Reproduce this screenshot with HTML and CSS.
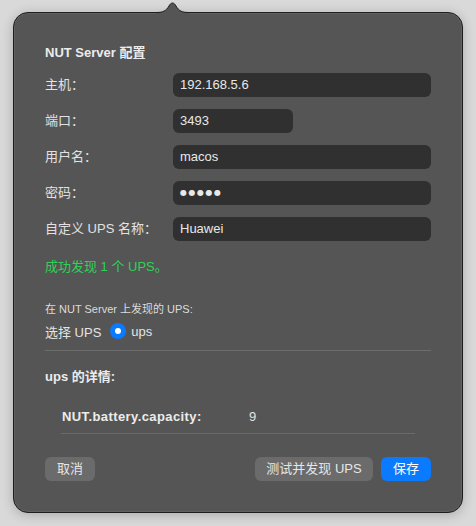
FILE: index.html
```html
<!DOCTYPE html>
<html lang="zh">
<head>
<meta charset="utf-8">
<link rel="stylesheet" href="styles.css">
</head>
<body>
<div class="popover">
  <svg class="arrow" width="33" height="14" viewBox="0 0 33 14">
    <path d="M0,12.5 C7,12.5 10,11 13,6 C15,2 18,2 20,6 C23,11 26,12.5 33,12.5 L33,14 L0,14 Z" fill="#555555"/>
    <path d="M0,12.5 C7,12.5 10,11 13,6 C15,2 18,2 20,6 C23,11 26,12.5 33,12.5" fill="none" stroke="#1e1e1e" stroke-width="1"/>
  </svg>
  <div class="title">NUT Server 配置</div>
  <div class="form">
    <div class="label">主机：</div><div class="field">192.168.5.6</div>
    <div class="label">端口：</div><div class="field short">3493</div>
    <div class="label">用户名：</div><div class="field">macos</div>
    <div class="label">密码：</div><div class="field"><span class="dots">●●●●●</span></div>
    <div class="label">自定义 UPS 名称：</div><div class="field">Huawei</div>
  </div>
  <div class="success">成功发现 1 个 UPS。</div>
  <div class="small">在 NUT Server 上发现的 UPS:</div>
  <div class="select-row">
    <span>选择 UPS</span>
    <span class="radio"><span class="radio-dot"></span></span>
    <span>ups</span>
  </div>
  <div class="divider"></div>
  <div class="section">ups 的详情:</div>
  <div class="detail">
    <span class="detail-key">NUT.battery.capacity:</span>
    <span class="detail-val">9</span>
  </div>
  <div class="divider inner"></div>
  <div class="buttons">
    <div class="btn">取消</div>
    <div class="spacer"></div>
    <div class="btn test">测试并发现 UPS</div>
    <div class="btn primary">保存</div>
  </div>
</div>
</body>
</html>
```
FILE: styles.css
```css
html, body {
  margin: 0;
  padding: 0;
}
body {
  background: #d9d9d9;
  width: 476px;
  height: 526px;
  overflow: hidden;
  font-family: "Liberation Sans", "Noto Sans CJK SC", sans-serif;
  font-size: 13px;
  color: #e4e4e4;
}
.popover {
  position: relative;
  margin: 12px 0 0 13px;
  width: 450px;
  height: 501px;
  box-sizing: border-box;
  background: #555555;
  border: 1px solid #1e1e1e;
  border-radius: 15px;
  box-shadow: 0 2px 12px rgba(0,0,0,0.22), inset 0 0 0 1px rgba(255,255,255,0.07);
  padding: 32px 31px 0 31px;
}
.arrow {
  position: absolute;
  top: -13px;
  left: 142px;
}
.title {
  font-weight: bold;
  line-height: 16px;
  color: #ececec;
}
.form {
  display: grid;
  grid-template-columns: 128px 258px;
  row-gap: 12px;
  margin-top: 12px;
  align-items: center;
}
.label {
  line-height: 24px;
  color: #e2e2e2;
}
.field {
  height: 24px;
  line-height: 24px;
  background: #303030;
  border-radius: 6px;
  padding-left: 7px;
  box-sizing: border-box;
  color: #e8e8e8;
}
.field.short {
  width: 120px;
}
.dots {
  font-family: "DejaVu Sans", sans-serif;
  font-size: 8px;
  letter-spacing: 1.5px;
  vertical-align: top;
  display: inline-block;
  line-height: 24px;
}
.success {
  margin-top: 18px;
  line-height: 16px;
  color: #30d158;
}
.small {
  margin-top: 27px;
  font-size: 11px;
  line-height: 14px;
  color: #dcdcdc;
}
.select-row {
  margin-top: 5px;
  height: 20px;
  display: flex;
  align-items: center;
  color: #e4e4e4;
}
.radio {
  width: 16px;
  height: 16px;
  border-radius: 50%;
  background: #0a7aff;
  margin-left: 9px;
  margin-right: 5px;
  display: flex;
  align-items: center;
  justify-content: center;
}
.radio-dot {
  width: 6px;
  height: 6px;
  border-radius: 50%;
  background: #ffffff;
}
.divider {
  margin-top: 9px;
  height: 1px;
  background: #6e6e6e;
}
.section {
  margin-top: 18px;
  line-height: 16px;
  font-weight: bold;
  color: #ececec;
}
.detail {
  margin-top: 24px;
  line-height: 16px;
  padding-left: 17px;
  display: flex;
}
.detail-key {
  font-weight: bold;
  letter-spacing: 0.4px;
  width: 187px;
  color: #ececec;
}
.detail-val {
  color: #e4e4e4;
}
.divider.inner {
  margin-top: 8px;
  margin-left: 16px;
  width: 354px;
  background: #6a6a6a;
}
.buttons {
  margin-top: 23px;
  display: flex;
  gap: 8px;
}
.spacer {
  flex: 1;
}
.btn {
  height: 24px;
  line-height: 24px;
  width: 50px;
  text-align: center;
  border-radius: 6px;
  background: #6b6b6b;
  color: #e6e6e6;
}
.btn.test {
  width: 118px;
}
.btn.primary {
  background: #0a7aff;
  color: #ffffff;
}
```
